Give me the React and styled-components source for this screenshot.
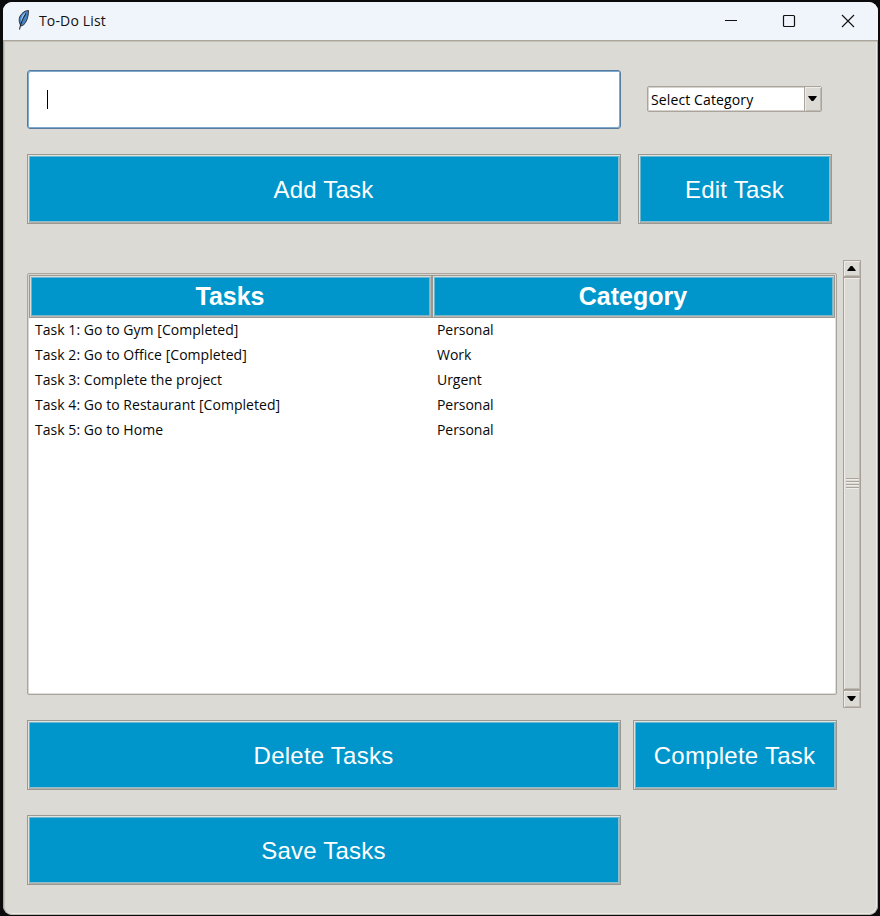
import React from "react";
import styled, { createGlobalStyle } from "styled-components";

const Global = createGlobalStyle`
  * { box-sizing: border-box; }
  body { margin: 0; background: #0b0a0c; overflow: hidden; }
`;

const Desktop = styled.div`
  height: 916px;
  width: 880px;
  padding: 2px 2px 1px 3px;
  background: #0b0a0c;
`;

const Window = styled.main`
  height: 913px;
  display: flex;
  flex-direction: column;
  border-radius: 9px;
  overflow: hidden;
  background: #dcdad5;
`;

const TitleBar = styled.header`
  height: 38px;
  flex: none;
  display: flex;
  align-items: center;
  background: #f0f4fb;
  color: #111;
  font: 14px/20px "Open Sans", "Noto Sans", sans-serif;
`;

const Feather = styled.svg`
  width: 16px;
  height: 22px;
  margin: 0 7px 2px 13px;
`;

const Title = styled.span`
  flex: 1;
  letter-spacing: 0.15px;
`;

const Controls = styled.div`
  display: flex;
  gap: 45px;
  padding-right: 23px;
  svg { width: 14px; height: 14px; display: block; }
`;

const Body = styled.div`
  flex: 1;
  display: flex;
  flex-direction: column;
  padding: 29px 0 0 23px;
  border: 1px solid #a9a49c;
  border-bottom-color: #bab5ab;
  border-radius: 0 0 9px 9px;
  box-shadow: inset 1px 1px #c8c3ba, inset -1px -1px #eeebe7;
`;

const Row = styled.div`
  display: flex;
  flex: none;
  align-items: flex-start;
  gap: ${(p) => p.$gap}px;
  margin-bottom: ${(p) => p.$after}px;
`;

const Entry = styled.div`
  width: 594px;
  height: 59px;
  display: flex;
  align-items: center;
  padding-left: 19px;
  background: #fff;
  border: 1px solid #557b9f;
  border-radius: 3px;
  box-shadow: inset 1px 1px #7fa9cd, inset -1px -1px #7fa9cd;
`;

const Caret = styled.span`
  width: 1px;
  height: 19px;
  background: #000;
`;

const Combo = styled.div`
  width: 175px;
  height: 26px;
  margin-top: 16px;
  display: flex;
  border: 1px solid #aaa49c;
  border-radius: 2px;
  box-shadow: inset 0 0 0 1px #d6d2cc;
  background: #fff;
`;

const ComboText = styled.span`
  flex: 1;
  padding-left: 3px;
  font: 14px/25px "Open Sans", "Noto Sans", sans-serif;
  letter-spacing: 0.12px;
  white-space: nowrap;
  color: #000;
`;

const ArrowCell = styled.span`
  width: ${(p) => p.$w}px;
  height: ${(p) => p.$h}px;
  flex: none;
  display: flex;
  align-items: center;
  justify-content: center;
  padding: 0 1px 1px 0;
  background: #dcdad5;
  border: 1px solid #aaa49c;
  border-width: ${(p) => (p.$left ? "0 0 0 1px" : "1px")};
  box-shadow: inset 1px 1px #efece7, inset -1px -1px #bfbab2;
  svg { width: 9px; height: 5px; }
`;

const RaisedBlue = styled.button`
  width: ${(p) => p.$w}px;
  height: 70px;
  padding: 1px 1px 0 0;
  border: 1px solid #9a9892;
  border-radius: 0;
  background: #0096cb;
  box-shadow: inset 1px 1px #e4e2dd, inset -1px -1px #b0aea8,
    inset 2px 2px #67b6d2, inset -2px -2px #8fbfcd;
  color: #fff;
  font: 24px/28px "Liberation Sans", Arial, sans-serif;
  letter-spacing: 0.24px;
  white-space: nowrap;
`;

const ListRow = styled.section`
  display: flex;
  flex: none;
  align-items: center;
  gap: 6px;
  height: 448px;
  margin-bottom: 12px;
`;

const Tree = styled.div`
  width: 810px;
  height: 422px;
  padding: 1px;
  background: #fff;
  border: 1px solid #a9a49c;
  border-radius: 2px;
  box-shadow: inset 1px 1px #d9d5cf, inset -1px -1px #e1ded9;
`;

const Columns = styled.div`
  display: grid;
  grid-template-columns: 403px 403px;
`;

const Heading = styled.div`
  height: 43px;
  display: flex;
  align-items: center;
  justify-content: center;
  padding: 0 1px 2px 0;
  border: 1px solid #9a9892;
  background: #0096cb;
  box-shadow: inset 1px 1px #dedcd7, inset -1px -1px #bbb8b2,
    inset 2px 2px #67b6d2, inset -2px -2px #79b6ca;
  color: #fff;
  font: bold 25px/30px "Liberation Sans", Arial, sans-serif;
`;

const Cell = styled.div`
  height: 25px;
  padding-left: ${(p) => (p.$wide ? 6 : 5)}px;
  color: #080808;
  font: 14px/24px "Open Sans", "Noto Sans", sans-serif;
  letter-spacing: ${(p) => (p.$wide ? "0.04px" : "-0.05px")};
  white-space: nowrap;
`;

const Scrollbar = styled.div`
  width: 18px;
  height: 448px;
  display: flex;
  flex-direction: column;
`;

const Thumb = styled.div`
  flex: 1;
  display: flex;
  align-items: center;
  justify-content: center;
  border: 1px solid #a6a098;
  box-shadow: inset 1px 1px #efece7, inset -1px -1px #bfbab2;
`;

const Grip = styled.div`
  width: 13px;
  height: 12px;
  background: repeating-linear-gradient(#a9a49c 0 1px, #f0ede9 1px 2px, #dcdad5 2px 3px);
`;

const Triangle = ({ up }) => (
  <svg viewBox="0 0 10 6">
    <path d={up ? "M0 6V5L4 0H6L10 5V6Z" : "M0 0H10V1L6 6H4L0 1Z"} fill="#000" />
  </svg>
);

const tasks = [
  ["Task 1: Go to Gym [Completed]", "Personal"],
  ["Task 2: Go to Office [Completed]", "Work"],
  ["Task 3: Complete the project", "Urgent"],
  ["Task 4: Go to Restaurant [Completed]", "Personal"],
  ["Task 5: Go to Home", "Personal"],
];

export default function App() {
  return (
    <Desktop>
      <Global />
      <Window>
        <TitleBar>
          <Feather viewBox="0 0 16 22">
            <path d="M4 15Q1.5 9 6 4.5 8.5 1.5 12.5 1.5 12.5 11 7.5 16L5 17Z" fill="#4384c6" stroke="#35383d" strokeWidth="1" />
            <path d="M5 13Q4.5 8 8 4.5L9.5 4Q7.5 8 6 13Z" fill="#8fc2f0" />
            <path d="M3.5 20.5Q5 12 10 4.5" fill="none" stroke="#1b2430" strokeWidth="1.1" />
          </Feather>
          <Title>To-Do List</Title>
          <Controls>
            <svg viewBox="0 0 14 14"><path d="M2 6.5H14" stroke="#111" /></svg>
            <svg viewBox="0 0 14 14"><rect x="1.5" y="1.5" width="11" height="11" rx="1" fill="none" stroke="#111" strokeWidth="1.2" /></svg>
            <svg viewBox="0 0 14 14"><path d="M1 1 13 13M13 1 1 13" stroke="#111" strokeWidth="1.1" /></svg>
          </Controls>
        </TitleBar>
        <Body>
          <Row $gap={26} $after={25}>
            <Entry><Caret /></Entry>
            <Combo>
              <ComboText>Select Category</ComboText>
              <ArrowCell $w={17} $h={24} $left><Triangle /></ArrowCell>
            </Combo>
          </Row>
          <Row $gap={17} $after={36}>
            <RaisedBlue $w={594}>Add Task</RaisedBlue>
            <RaisedBlue $w={194}>Edit Task</RaisedBlue>
          </Row>
          <ListRow>
            <Tree>
              <Columns>
                <Heading>Tasks</Heading>
                <Heading>Category</Heading>
                {tasks.map(([name, category]) => (
                  <React.Fragment key={name}>
                    <Cell $wide>{name}</Cell>
                    <Cell>{category}</Cell>
                  </React.Fragment>
                ))}
              </Columns>
            </Tree>
            <Scrollbar>
              <ArrowCell $w={18} $h={17}><Triangle up /></ArrowCell>
              <Thumb><Grip /></Thumb>
              <ArrowCell $w={18} $h={18}><Triangle /></ArrowCell>
            </Scrollbar>
          </ListRow>
          <Row $gap={12} $after={25}>
            <RaisedBlue $w={594}>Delete Tasks</RaisedBlue>
            <RaisedBlue $w={204}>Complete Task</RaisedBlue>
          </Row>
          <Row $gap={0} $after={0}>
            <RaisedBlue $w={594}>Save Tasks</RaisedBlue>
          </Row>
        </Body>
      </Window>
    </Desktop>
  );
}
